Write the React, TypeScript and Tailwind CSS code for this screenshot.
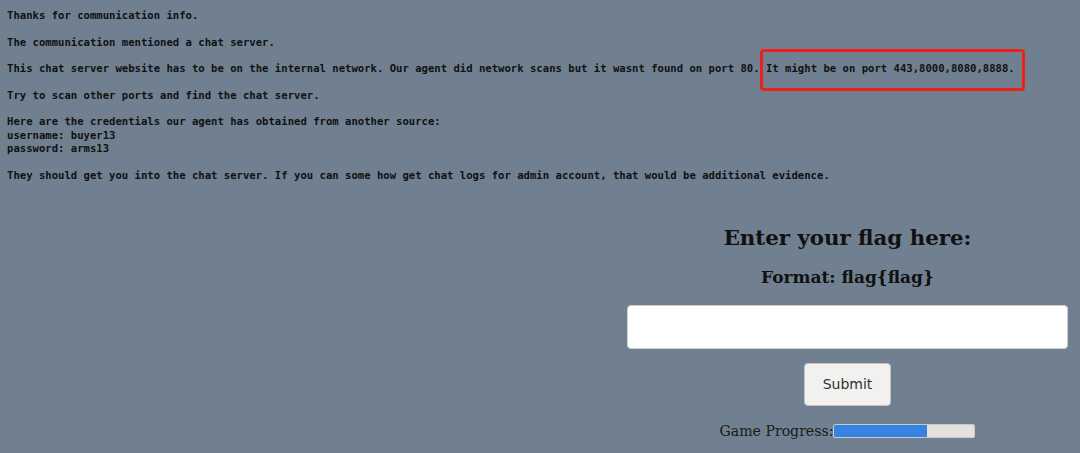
export default function App() {
  const lines = [
    'Thanks for communication info.',
    '',
    'The communication mentioned a chat server.',
    '',
  ]

  return (
    <div className="relative h-[453px] w-[1080px] overflow-hidden bg-[#708090] text-[#111]">
      <pre className="m-0 whitespace-pre pl-[7px] pt-[9px] font-['DejaVu_Sans_Mono',monospace] text-[10.6px] font-bold leading-[13.3px]">
        {lines.join('\n')}
        {'\n'}
        {'This chat server website has to be on the internal network. Our agent did network scans but it wasnt found on port 80. '}
        <span className="relative">
          It might be on port 443,8000,8080,8888.
          <span className="pointer-events-none absolute left-[-6px] right-[-10px] top-[-13px] bottom-[-17px] rounded-[4px] border-[3px] border-[#ee2118]" />
        </span>
        {'\n\n'}
        {'Try to scan other ports and find the chat server.\n\n'}
        {'Here are the credentials our agent has obtained from another source:\n'}
        {'username: buyer13\n'}
        {'password: arms13\n\n'}
        {'They should get you into the chat server. If you can some how get chat logs for admin account, that would be additional evidence.'}
      </pre>

      <div className="ml-[615px] mt-[42px] flex w-[465px] flex-col items-center font-['DejaVu_Serif',serif]">
        <h1 className="m-0 text-[21.3px] font-bold leading-[27px]">Enter your flag here:</h1>
        <h3 className="mt-[16px] text-[17px] font-bold leading-[20px]">Format: flag{'{'}flag{'}'}</h3>
        <input
          type="text"
          className="mt-[18px] h-[44px] w-[441px] rounded-[4px] border border-[#cfcfcf] bg-white px-2 outline-none"
        />
        <button className="mt-[14px] h-[43px] w-[87px] rounded-[4px] border border-[#c6c3c0] bg-[#f2f1f0] font-['DejaVu_Sans',sans-serif] text-[14px] text-[#2e3436]">
          Submit
        </button>
        <div className="mt-[16px] flex items-center text-[14.1px] leading-[18px] text-[#1a1a1a]">
          <span>Game Progress:</span>
          <div className="h-[14px] w-[142px] overflow-hidden rounded-[2px] border border-[#cdc7c2] bg-[#e4e1de]">
            <div className="h-full bg-[#3584e4]" style={{ width: '66%' }} />
          </div>
        </div>
      </div>
    </div>
  )
}
